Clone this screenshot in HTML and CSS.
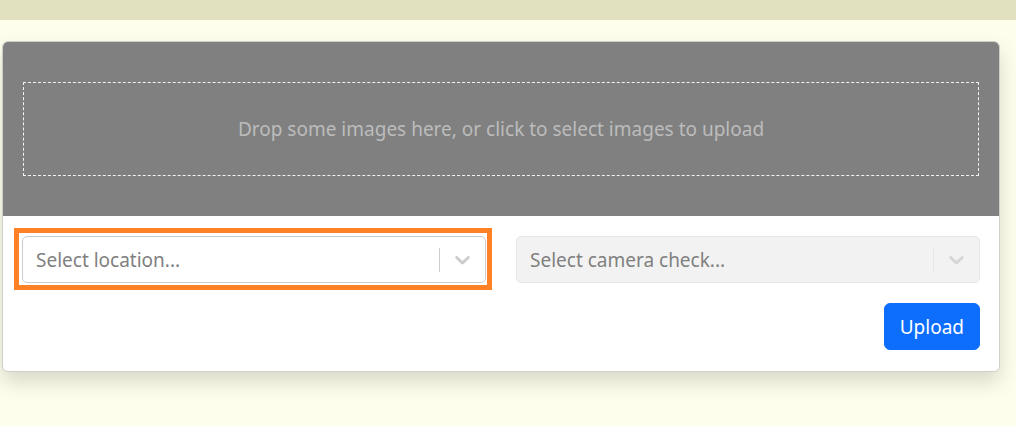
FILE: index.html
```html
<!DOCTYPE html>
<html lang="en">
<head>
<meta charset="utf-8">
<title>Upload</title>
<link rel="stylesheet" href="styles.css">
</head>
<body>
<div class="topbar"></div>
<main class="page">
  <section class="card">
    <div class="card-header">
      <div class="dropzone">Drop some images here, or click to select images to upload</div>
    </div>
    <div class="card-body">
      <div class="selects">
        <div class="select highlight">
          <span class="placeholder">Select location...</span>
          <span class="indicators">
            <span class="sep"></span>
            <svg class="chev" viewBox="0 0 20 20" width="25" height="25"><path d="M4.516 7.548c0.436-0.446 1.043-0.481 1.576 0l3.908 3.747 3.908-3.747c0.533-0.481 1.141-0.446 1.574 0 0.436 0.445 0.408 1.197 0 1.615-0.406 0.418-4.695 4.502-4.695 4.502-0.217 0.223-0.502 0.335-0.787 0.335s-0.57-0.112-0.789-0.335c0 0-4.287-4.084-4.695-4.502s-0.436-1.170 0-1.615z"/></svg>
          </span>
        </div>
        <div class="select disabled">
          <span class="placeholder">Select camera check...</span>
          <span class="indicators">
            <span class="sep"></span>
            <svg class="chev" viewBox="0 0 20 20" width="25" height="25"><path d="M4.516 7.548c0.436-0.446 1.043-0.481 1.576 0l3.908 3.747 3.908-3.747c0.533-0.481 1.141-0.446 1.574 0 0.436 0.445 0.408 1.197 0 1.615-0.406 0.418-4.695 4.502-4.695 4.502-0.217 0.223-0.502 0.335-0.787 0.335s-0.57-0.112-0.789-0.335c0 0-4.287-4.084-4.695-4.502s-0.436-1.170 0-1.615z"/></svg>
          </span>
        </div>
      </div>
      <div class="actions">
        <button class="btn-primary" type="button">Upload</button>
      </div>
    </div>
  </section>
</main>
</body>
</html>
```
FILE: styles.css
```css
* { box-sizing: border-box; }
html, body { margin: 0; padding: 0; }
body {
  background: #fdfeeb;
  font-family: "Noto Sans", "Open Sans", "DejaVu Sans", sans-serif;
  height: 426px;
  overflow: hidden;
}
.topbar {
  height: 20px;
  background: #e2e1bf;
}
.page {
  padding: 21px 16px 0 2px;
}
.card {
  width: 998px;
  background: #fff;
  border: 1px solid #cfcfc8;
  border-radius: 6px;
  box-shadow: 0 10px 20px rgba(0, 0, 0, 0.15);
  overflow: hidden;
}
.card-header {
  background: #808080;
  padding: 40px 20px 40px;
}
.dropzone {
  height: 94px;
  border: 1px dashed #f4f4f4;
  display: flex;
  align-items: center;
  justify-content: center;
  color: #bcbcbc;
  font-size: 19px;
}
.card-body {
  padding: 20px 19px 21px 19px;
}
.selects {
  display: grid;
  grid-template-columns: 1fr 1fr;
  gap: 30px;
}
.select {
  height: 47px;
  border: 1px solid #cccccc;
  border-radius: 5px;
  display: flex;
  align-items: center;
  padding-left: 13px;
  background: #fff;
}
.select.highlight {
  position: relative;
}
.select.highlight::after {
  content: "";
  position: absolute;
  left: -9px;
  top: -9px;
  right: -7px;
  bottom: -8px;
  border: 5px solid #ff8125;
  pointer-events: none;
}
.select.disabled {
  background: #f2f2f2;
  border-color: #e6e6e6;
}
.placeholder {
  flex: 1;
  color: #808080;
  font-size: 19px;
}
.indicators {
  display: flex;
  align-items: center;
  height: 100%;
}
.sep {
  width: 1px;
  height: 24px;
  background: #cccccc;
}
.disabled .sep { background: #e6e6e6; }
.chev {
  fill: #cccccc;
  margin: 0 10px;
}
.disabled .chev { fill: #d6d6d6; }
.actions {
  display: flex;
  justify-content: flex-end;
  margin-top: 20px;
}
.btn-primary {
  background: #0d6efd;
  color: #fff;
  border: 1px solid #0d6efd;
  border-radius: 6px;
  height: 47px;
  padding: 0 15px;
  font-family: inherit;
  font-size: 19px;
}
```
